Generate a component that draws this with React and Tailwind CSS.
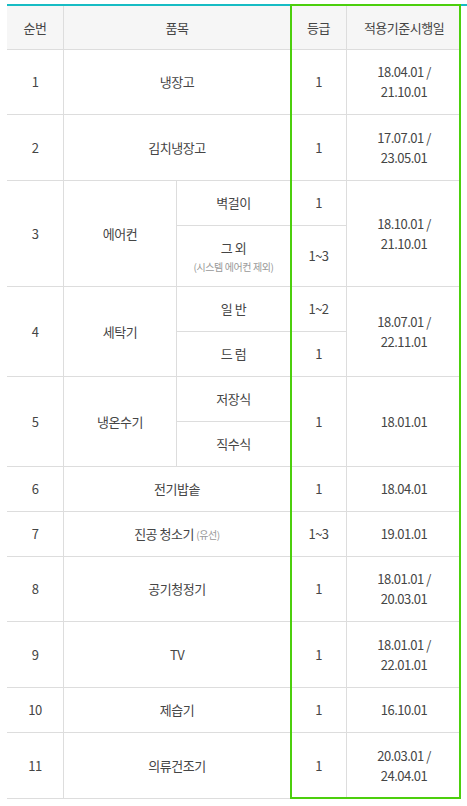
import React from 'react';

const Td = ({ children, first, rowSpan, colSpan, head }) => (
  <td
    rowSpan={rowSpan}
    colSpan={colSpan}
    className={
      'p-0 text-center align-middle border-b border-[#dddddd] leading-[20px] ' +
      (first ? '' : 'border-l ') +
      (head ? 'bg-[#f6f6f6]' : 'bg-white')
    }
  >
    {children}
  </td>
);

const Small = ({ children }) => (
  <span className="text-[10px] text-[#999999] tracking-[-0.4px]">{children}</span>
);

const App = () => {
  return (
    <div className="w-[467px] h-[806px] bg-white overflow-hidden pt-[4px]">
      <div
        className="relative ml-[7px] w-[460px] border-t-2 border-[#17bcc4] text-[13px] text-[#454545] tracking-[-0.5px]"
        style={{ fontFamily: '"Noto Sans CJK KR", "Noto Sans", sans-serif' }}
      >
        <table className="w-[454px] table-fixed border-separate border-spacing-0">
          <colgroup>
            <col className="w-[56px]" />
            <col className="w-[113px]" />
            <col className="w-[114px]" />
            <col className="w-[56px]" />
            <col className="w-[115px]" />
          </colgroup>
          <tbody>
            <tr className="h-[44px]">
              <Td first head>순번</Td>
              <Td head colSpan={2}>품목</Td>
              <Td head>등급</Td>
              <Td head>적용기준시행일</Td>
            </tr>
            <tr className="h-[65px]">
              <Td first>1</Td>
              <Td colSpan={2}>냉장고</Td>
              <Td>1</Td>
              <Td>18.04.01 /<br />21.10.01</Td>
            </tr>
            <tr className="h-[66px]">
              <Td first>2</Td>
              <Td colSpan={2}>김치냉장고</Td>
              <Td>1</Td>
              <Td>17.07.01 /<br />23.05.01</Td>
            </tr>
            <tr className="h-[45px]">
              <Td first rowSpan={2}>3</Td>
              <Td rowSpan={2}>에어컨</Td>
              <Td>벽걸이</Td>
              <Td>1</Td>
              <Td rowSpan={2}>18.10.01 /<br />21.10.01</Td>
            </tr>
            <tr className="h-[61px]">
              <Td>
                그 외
                <br />
                <span className="block leading-[16px]"><Small>(시스템 에어컨 제외)</Small></span>
              </Td>
              <Td>1~3</Td>
            </tr>
            <tr className="h-[45px]">
              <Td first rowSpan={2}>4</Td>
              <Td rowSpan={2}>세탁기</Td>
              <Td>일 반</Td>
              <Td>1~2</Td>
              <Td rowSpan={2}>18.07.01 /<br />22.11.01</Td>
            </tr>
            <tr className="h-[45px]">
              <Td>드 럼</Td>
              <Td>1</Td>
            </tr>
            <tr className="h-[45px]">
              <Td first rowSpan={2}>5</Td>
              <Td rowSpan={2}>냉온수기</Td>
              <Td>저장식</Td>
              <Td rowSpan={2}>1</Td>
              <Td rowSpan={2}>18.01.01</Td>
            </tr>
            <tr className="h-[45px]">
              <Td>직수식</Td>
            </tr>
            <tr className="h-[45px]">
              <Td first>6</Td>
              <Td colSpan={2}>전기밥솥</Td>
              <Td>1</Td>
              <Td>18.04.01</Td>
            </tr>
            <tr className="h-[45px]">
              <Td first>7</Td>
              <Td colSpan={2}>
                진공 청소기 <Small>(유선)</Small>
              </Td>
              <Td>1~3</Td>
              <Td>19.01.01</Td>
            </tr>
            <tr className="h-[65px]">
              <Td first>8</Td>
              <Td colSpan={2}>공기청정기</Td>
              <Td>1</Td>
              <Td>18.01.01 /<br />20.03.01</Td>
            </tr>
            <tr className="h-[66px]">
              <Td first>9</Td>
              <Td colSpan={2}>TV</Td>
              <Td>1</Td>
              <Td>18.01.01 /<br />22.01.01</Td>
            </tr>
            <tr className="h-[45px]">
              <Td first>10</Td>
              <Td colSpan={2}>제습기</Td>
              <Td>1</Td>
              <Td>16.10.01</Td>
            </tr>
            <tr className="h-[66px]">
              <Td first>11</Td>
              <Td colSpan={2}>의류건조기</Td>
              <Td>1</Td>
              <Td>20.03.01 /<br />24.04.01</Td>
            </tr>
          </tbody>
        </table>
        {/* highlight box over 등급 / 시행일 columns */}
        <div className="absolute top-[-2px] bottom-0 left-[283px] w-[171px] border-2 border-[#4ccf0d] pointer-events-none" />
      </div>
    </div>
  );
};

export default App;
